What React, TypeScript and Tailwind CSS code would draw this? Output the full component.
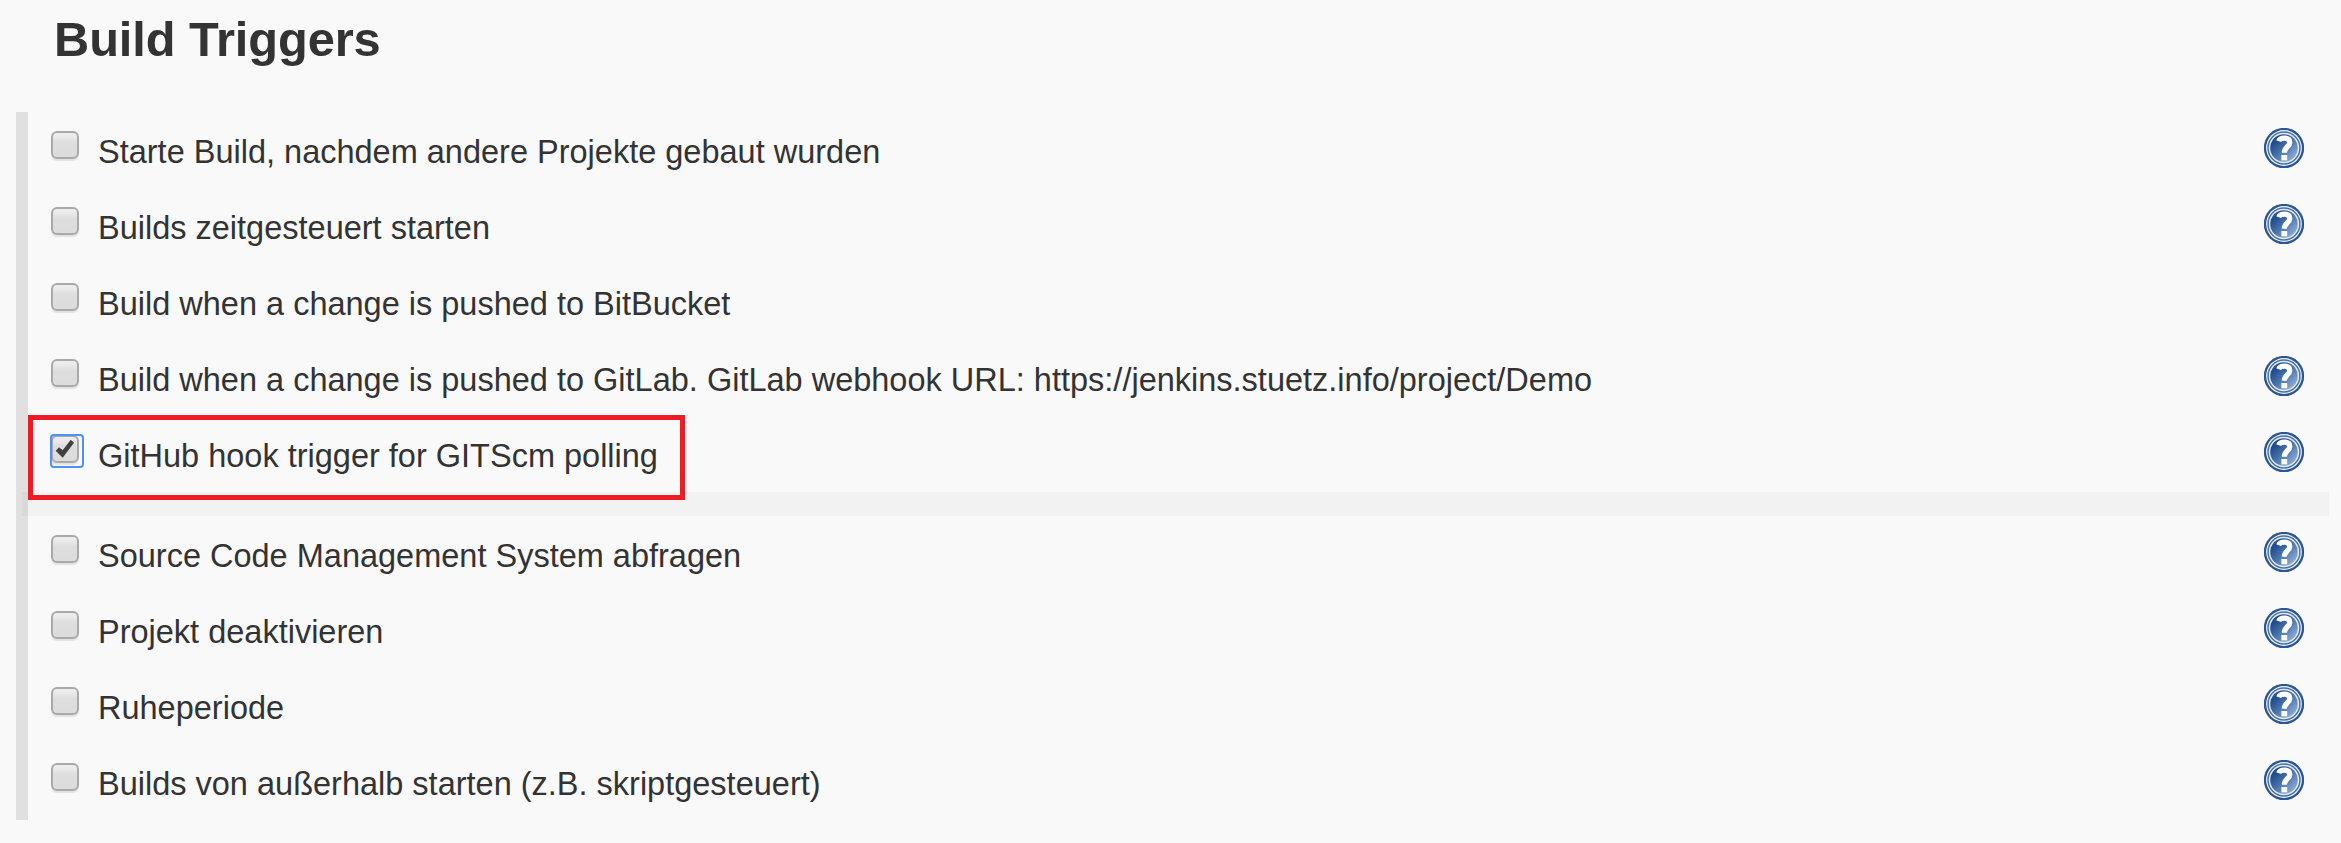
import React from "react";

type Trigger = { label: string; help: boolean; checked?: boolean };

const upper: Trigger[] = [
  { label: "Starte Build, nachdem andere Projekte gebaut wurden", help: true },
  { label: "Builds zeitgesteuert starten", help: true },
  { label: "Build when a change is pushed to BitBucket", help: false },
  {
    label:
      "Build when a change is pushed to GitLab. GitLab webhook URL: https://jenkins.stuetz.info/project/Demo",
    help: true,
  },
  { label: "GitHub hook trigger for GITScm polling", help: true, checked: true },
];

const lower: Trigger[] = [
  { label: "Source Code Management System abfragen", help: true },
  { label: "Projekt deaktivieren", help: true },
  { label: "Ruheperiode", help: true },
  { label: "Builds von außerhalb starten (z.B. skriptgesteuert)", help: true },
];

function HelpIcon() {
  return (
    <svg viewBox="0 0 40 40" className="block size-10" role="img">
      <defs>
        <linearGradient id="helpFill" x1="0.1" y1="0.1" x2="0.9" y2="0.9">
          <stop offset="0.15" stopColor="#204d8e" />
          <stop offset="0.5" stopColor="#4a72ab" />
          <stop offset="1" stopColor="#8fb0da" />
        </linearGradient>
        <filter id="helpSoft" x="-10%" y="-10%" width="120%" height="120%">
          <feGaussianBlur stdDeviation="0.7" />
        </filter>
      </defs>
      <g filter="url(#helpSoft)">
        <circle cx="20" cy="20" r="20.2" fill="#2a5798" />
        <circle cx="20" cy="20" r="17.9" fill="#eef3fa" />
        <circle cx="20" cy="20" r="16.7" fill="#4a70aa" />
        <circle cx="20" cy="20" r="15.2" fill="#e6edf6" />
        <circle cx="20" cy="20" r="13.8" fill="url(#helpFill)" />
        <path
          d="M14.6 13.2c.8-2.2 2.8-3 5.8-3 3.4 0 5.4 1.5 5.4 4.2 0 4.2-5.4 4.6-5.4 10.4"
          fill="none"
          stroke="#fff"
          strokeWidth="5.2"
        />
        <rect x="17.4" y="27" width="5.8" height="5.4" fill="#fff" />
      </g>
    </svg>
  );
}

function Checkbox({ checked }: { checked?: boolean }) {
  return (
    <span
      role="checkbox"
      aria-checked={!!checked}
      className="relative mt-[19px] block h-7 w-7 shrink-0 rounded-[6px] border-2 border-[#a9a9a9] bg-linear-to-b from-[#ededed] from-10% via-[#dedede] via-40% to-[#dcdcdc] shadow-[0_2px_1px_rgba(0,0,0,0.09)]"
    >
      {checked && (
        <>
          <span className="absolute -top-[3px] -left-[3px] size-[34px] rounded-[4px] border-2 border-[#4d90fe]" />
          <svg viewBox="0 0 24 24" className="absolute top-0 left-0 size-6">
            <path d="M2.7 13.7 6 10.3l3.7 3 8-10.6 3.3 3L9.7 20.7z" fill="#404040" />
          </svg>
        </>
      )}
    </span>
  );
}

function Row({ label, help, checked }: Trigger) {
  return (
    <div className="relative flex h-[76px] items-start pr-[25px] pl-[23px]">
      {checked && (
        <div className="absolute -top-px left-0 z-10 h-[85px] w-[657px] border-[5px] border-[#ed1c24]" />
      )}
      <Checkbox checked={checked} />
      <span className="mt-5 ml-[19px] flex-1 text-[32.5px] leading-10 whitespace-nowrap">{label}</span>
      {help && (
        <span className="mt-4">
          <HelpIcon />
        </span>
      )}
    </div>
  );
}

export default function App() {
  return (
    <main className="h-[843px] w-[2341px] overflow-hidden bg-[#f9f9f9] pr-3 pl-4 font-['Liberation_Sans',Arial,sans-serif] text-[#333]">
      <h1 className="h-28 pt-[9px] pl-[38px] text-[48.75px] leading-[60px] font-bold tracking-[-0.08px]">
        Build Triggers
      </h1>
      <section className="border-l-12 border-[#e0e0e0]">
        {upper.map((t) => (
          <Row key={t.label} {...t} />
        ))}
        <div className="-ml-[6px] h-6 bg-black/[0.028]" />
        {lower.map((t) => (
          <Row key={t.label} {...t} />
        ))}
      </section>
    </main>
  );
}
